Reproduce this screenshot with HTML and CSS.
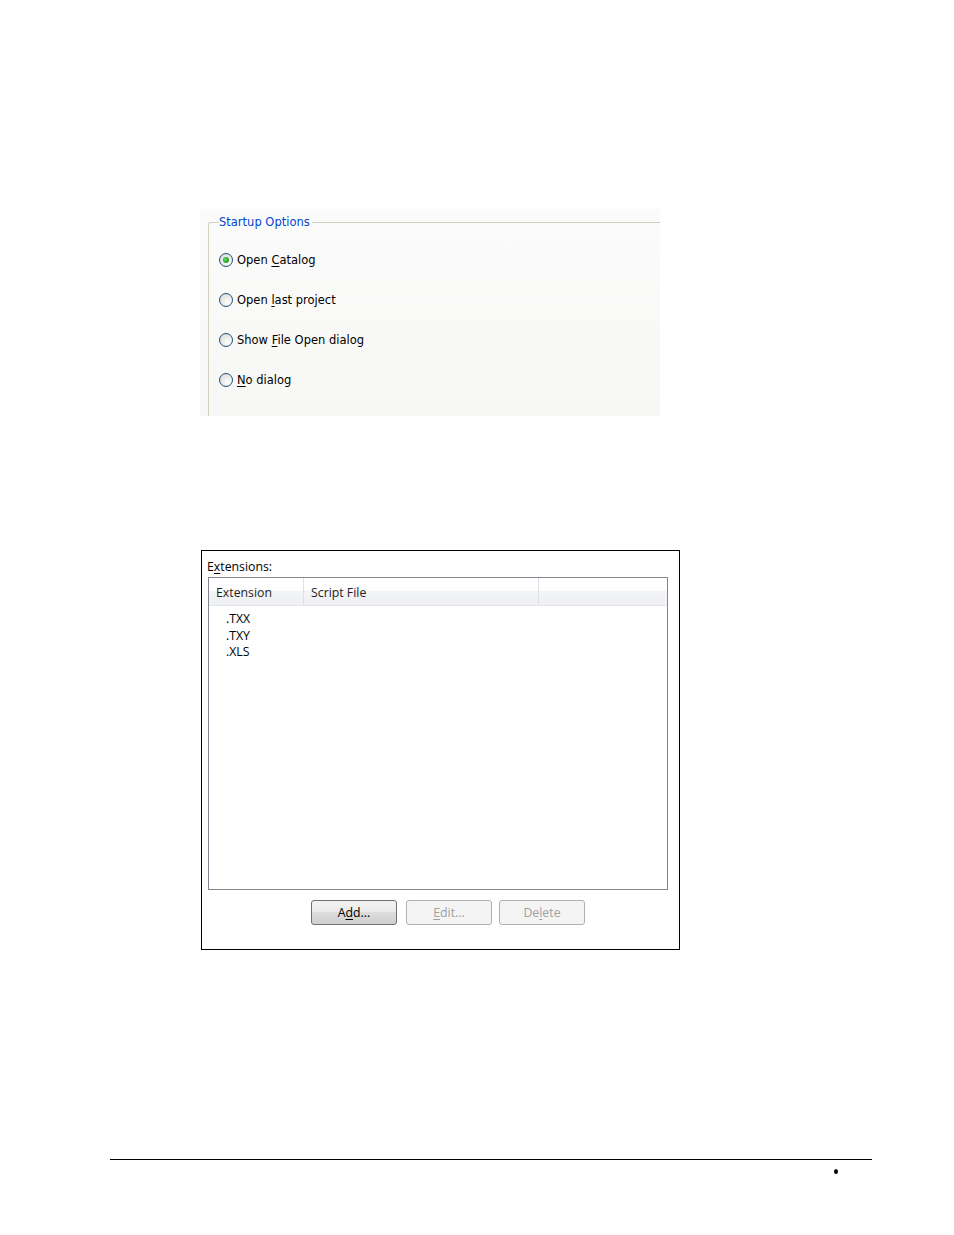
FILE: index.html
```html
<!DOCTYPE html>
<html>
<head>
<meta charset="utf-8">
<link rel="stylesheet" href="styles.css">
</head>
<body>
<div class="page">
  <div class="startup">
    <fieldset class="group">
      <legend class="legend">Startup Options</legend>
      <div class="radio-row"><span class="radio checked"><span class="dot"></span></span><span class="rlabel">Open <u>C</u>atalog</span></div>
      <div class="radio-row"><span class="radio"></span><span class="rlabel">Open <u>l</u>ast project</span></div>
      <div class="radio-row"><span class="radio"></span><span class="rlabel">Show <u>F</u>ile Open dialog</span></div>
      <div class="radio-row"><span class="radio"></span><span class="rlabel"><u>N</u>o dialog</span></div>
    </fieldset>
  </div>

  <div class="ext">
    <div class="ext-label">E<u>x</u>tensions:</div>
    <div class="list">
      <div class="list-head">
        <div class="col c1">Extension</div>
        <div class="col c2">Script File</div>
        <div class="col c3"></div>
      </div>
      <div class="list-body">
        <div class="item">.TXX</div>
        <div class="item">.TXY</div>
        <div class="item">.XLS</div>
      </div>
    </div>
    <div class="buttons">
      <div class="btn btn-add">A<u>d</u>d...</div>
      <div class="btn btn-off btn-edit"><u>E</u>dit...</div>
      <div class="btn btn-off btn-del">De<u>l</u>ete</div>
    </div>
  </div>

  <div class="footer">
    <div class="footer-line"></div>
    <div class="footer-row"><span class="bullet"></span></div>
  </div>
</div>
</body>
</html>
```

FILE: styles.css
```css
html, body {
  margin: 0;
  padding: 0;
  background: #ffffff;
}
.page {
  width: 954px;
  height: 1235px;
  padding-top: 209px;
  box-sizing: border-box;
  font-family: "DejaVu Sans", sans-serif;
}

/* Startup options panel */
.startup {
  margin-left: 200px;
  width: 460px;
  height: 207px;
  box-sizing: border-box;
  padding: 6px 0 0 8px;
  background: linear-gradient(to bottom, #fbfbfb 0%, #f7f7f5 100%);
  overflow: hidden;
}
.group {
  margin: 0;
  height: 230px;
  box-sizing: border-box;
  border: 1px solid #d0d0bf;
  border-right: none;
  border-bottom: none;
  border-top-left-radius: 3px;
  padding: 11px 0 0 10px;
}
.legend {
  color: #0046d5;
  font-size: 11.5px;
  padding: 0 2px 0 0;
  margin-left: 0;
  line-height: 14px;
}
.radio-row {
  display: flex;
  align-items: center;
  height: 40px;
}
.radio {
  width: 14px;
  height: 14px;
  box-sizing: border-box;
  border-radius: 50%;
  border: 1px solid #1c5180;
  background: radial-gradient(circle at 65% 65%, #ffffff 0%, #ececE6 45%, #d4d4cc 100%);
  display: flex;
  align-items: center;
  justify-content: center;
  flex: none;
}
.dot {
  width: 6px;
  height: 6px;
  border-radius: 50%;
  background: radial-gradient(circle at 40% 40%, #70d870 0%, #21a121 60%, #1a8a1a 100%);
}
.rlabel {
  margin-left: 4px;
  font-size: 11.5px;
  color: #000;
}
u {
  text-decoration: underline;
  text-underline-offset: 2px;
  text-decoration-thickness: 1px;
}

/* Extensions panel */
.ext {
  margin-top: 134px;
  margin-left: 201px;
  width: 479px;
  height: 400px;
  box-sizing: border-box;
  border: 1px solid #000;
  padding: 8px 11px 0 5px;
  font-family: "Open Sans", "Noto Sans", sans-serif;
  font-size: 12.3px;
  color: #000;
}
.ext-label {
  height: 18px;
  line-height: 16px;
}
.list {
  margin-left: 1px;
  width: 460px;
  height: 313px;
  box-sizing: border-box;
  border: 1px solid #828790;
  background: #fff;
}
.list-head {
  display: flex;
  height: 28px;
  background: linear-gradient(to bottom, #ffffff 0%, #ffffff 45%, #f3f4f6 50%, #eff0f3 100%);
  border-bottom: 1px solid #e4e5e8;
  box-sizing: border-box;
}
.col {
  line-height: 30px;
  color: #1e1e1e;
  box-sizing: border-box;
  border-right: 1px solid #dfe1e5;
  padding-left: 7px;
}
.c1 { width: 95px; }
.c2 { width: 235px; }
.c3 { flex: 1; border-right: none; }
.list-body {
  padding: 5px 0 0 17px;
}
.item {
  height: 16.5px;
  line-height: 16px;
}

.buttons {
  display: flex;
  padding-left: 104px;
  margin-top: 10px;
}
.btn {
  width: 86px;
  height: 25px;
  box-sizing: border-box;
  border: 1px solid #707070;
  border-radius: 3px;
  background: linear-gradient(to bottom, #f2f2f2 0%, #ebebeb 45%, #dddddd 50%, #cfcfcf 100%);
  text-align: center;
  line-height: 23px;
  color: #000;
}
.btn-off {
  border-color: #adb2b5;
  background: #f4f4f4;
  color: #a0a0a0;
}
.btn-edit { margin-left: 9px; }
.btn-del { margin-left: 7px; }

/* Footer */
.footer {
  margin-top: 209px;
  margin-left: 110px;
  width: 762px;
}
.footer-line {
  height: 1px;
  background: #000;
}
.footer-row {
  display: flex;
  justify-content: flex-end;
  padding-right: 34px;
  padding-top: 9px;
}
.bullet {
  width: 4px;
  height: 5px;
  border-radius: 50%;
  background: #000;
}
```
